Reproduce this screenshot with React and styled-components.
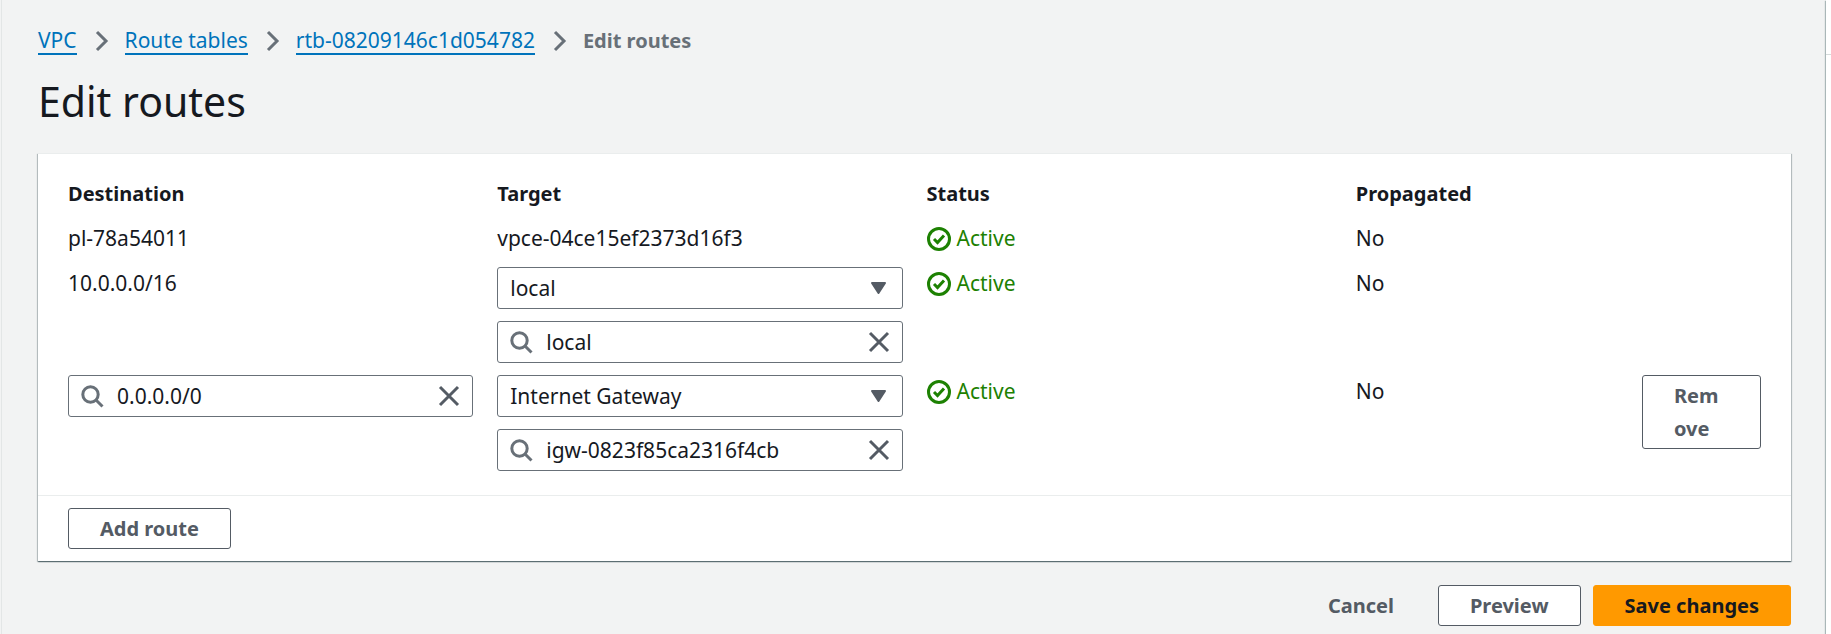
import React, { useState } from 'react';
import styled, { createGlobalStyle } from 'styled-components';

const GlobalStyle = createGlobalStyle`
  * { box-sizing: border-box; }
  body {
    margin: 0;
    background: #f2f3f3;
    color: #16191f;
    font: 400 21px/33px "Noto Sans", "Open Sans", sans-serif;
  }
  button, input, select { font: inherit; color: inherit; }
`;

const Shell = styled.div`
  display: flex;
  min-height: 100vh;
`;

const NavEdge = styled.div`
  flex: none;
  width: 2px;
  border-right: 1px solid #e3e6e6;
`;

const Content = styled.main`
  flex: 1;
  min-width: 0;
  padding: 24px 35px 8px 36px;
`;

const HelpPanel = styled.aside`
  flex: none;
  width: 5px;
  background: #fff;
  box-shadow: 0 1px 1px #aab7b8, -1px 1px 1px #aab7b8;
`;

const HelpHeader = styled.div`
  height: 55px;
  border-bottom: 1px solid #d5dbdb;
`;

const Crumbs = styled.ol`
  display: flex;
  flex-wrap: wrap;
  align-items: center;
  margin: 0;
  padding: 0;
  list-style: none;
`;

const Crumb = styled.li`
  display: flex;
  align-items: center;
  svg { margin: 0 16px; }
`;

const CrumbLink = styled.a`
  line-height: 26px;
  border-bottom: 2px solid #0073bb;
  color: #0073bb;
  text-decoration: none;
`;

const CrumbCurrent = styled.span`
  color: #687078;
  font-size: 20px;
  font-weight: 700;
`;

const Title = styled.h1`
  margin: 16px 0 24px;
  font-size: 41px;
  font-weight: 400;
  line-height: 56px;
`;

const Card = styled.section`
  background: #fff;
  border-top: 1px solid #eaeded;
  box-shadow: 0 1px 1px rgba(0, 28, 36, 0.4), 1px 1px 1px rgba(0, 28, 36, 0.2),
    -1px 1px 1px rgba(0, 28, 36, 0.2);
`;

const RouteTable = styled.table`
  display: block;
  padding: 23px 30px 24px;
  thead { display: block; margin-bottom: 12px; }
  tbody { display: grid; gap: 12px; }
`;

const Row = styled.tr`
  display: grid;
  grid-template-columns: repeat(12, minmax(0, 1fr));
  column-gap: 24px;
  align-items: start;
`;

const HeadCell = styled.th`
  grid-column: span ${(p) => p.$span};
  padding: 0;
  text-align: left;
  font-size: 20px;
  font-weight: 700;
`;

const Cell = styled.td`
  grid-column: span ${(p) => p.$span};
  display: grid;
  gap: 12px;
  padding: 0;
`;

const Field = styled.div`
  display: flex;
  align-items: center;
  height: 42px;
  padding: 0 11px;
  border: 1px solid #687078;
  border-radius: 3px;
  background: #fff;
`;

const FieldInput = styled.input`
  flex: 1;
  min-width: 0;
  height: 33px;
  margin-left: 13px;
  padding: 0;
  border: 0;
  outline: 0;
  background: transparent;
`;

const ClearButton = styled.button`
  display: flex;
  padding: 0;
  border: 0;
  background: none;
  cursor: pointer;
`;

const SelectWrap = styled.div`
  display: grid;
  align-items: center;
  > * { grid-area: 1 / 1; }
  svg { justify-self: end; margin-right: 16px; pointer-events: none; }
`;

const Select = styled.select`
  width: 100%;
  height: 42px;
  padding: 0 40px 0 12px;
  border: 1px solid #687078;
  border-radius: 3px;
  background: #fff;
  appearance: none;
`;

const Status = styled.span`
  display: flex;
  align-items: center;
  gap: 6px;
  color: #1d8102;
`;

const CardFooter = styled.div`
  padding: 12px 30px;
  border-top: 1px solid #eaeded;
`;

const tones = {
  normal: ['#fff', '#545b64', '#545b64'],
  primary: ['#ff9900', '#ff9900', '#16191f'],
  link: ['transparent', 'transparent', '#545b64'],
};

const Button = styled.button`
  padding: 3px 31px;
  border: 1px solid ${(p) => tones[p.$tone || 'normal'][1]};
  border-radius: 3px;
  background: ${(p) => tones[p.$tone || 'normal'][0]};
  color: ${(p) => tones[p.$tone || 'normal'][2]};
  font-size: 20px;
  font-weight: 700;
  text-align: left;
  cursor: pointer;
`;

const RemoveButton = styled(Button)`
  width: 100%;
  word-break: break-all;
`;

const Actions = styled.div`
  display: flex;
  justify-content: flex-end;
  gap: 12px;
  margin-top: 24px;
`;

const Chevron = () => (
  <svg width="16" height="22" viewBox="0 0 16 22" fill="none" stroke="#687078" strokeWidth="3" aria-hidden="true">
    <path d="M4 2l9 9-9 9" />
  </svg>
);

const SearchIcon = () => (
  <svg width="24" height="24" viewBox="0 0 24 24" fill="none" stroke="#687078" strokeWidth="3" aria-hidden="true">
    <circle cx="10.500" cy="10.500" r="7.700" />
    <path d="M15.500 15.500l7 7" />
  </svg>
);

const CloseIcon = () => (
  <svg width="24" height="24" viewBox="0 0 24 24" fill="none" stroke="#545b64" strokeWidth="3" strokeLinejoin="round" aria-hidden="true">
    <path d="M3 3l18 18M21 3L3 21" />
  </svg>
);

const CaretIcon = () => (
  <svg width="17" height="14" viewBox="0 0 17 14" fill="#545b64" stroke="#545b64" strokeWidth="2" strokeLinejoin="round" aria-hidden="true">
    <path d="M2 2h13L8.500 12z" />
  </svg>
);

const CheckIcon = () => (
  <svg width="24" height="24" viewBox="0 0 24 24" fill="none" stroke="#1d8102" strokeWidth="3" aria-hidden="true">
    <circle cx="12" cy="12" r="10.500" />
    <path d="M7 12l3.500 3.500L17 8.500" />
  </svg>
);

function SearchField({ label, initial }) {
  const [value, setValue] = useState(initial);
  return (
    <Field>
      <SearchIcon />
      <FieldInput aria-label={label} value={value} onChange={(e) => setValue(e.target.value)} />
      <ClearButton type="button" aria-label={`Clear ${label}`} onClick={() => setValue('')}>
        <CloseIcon />
      </ClearButton>
    </Field>
  );
}

function TargetSelect({ label, initial }) {
  return (
    <SelectWrap>
      <Select aria-label={label} defaultValue={initial}>
        <option>local</option>
        <option>Internet Gateway</option>
      </Select>
      <CaretIcon />
    </SelectWrap>
  );
}

const crumbs = ['VPC', 'Route tables', 'rtb-08209146c1d054782'];

const routes = [
  { destination: 'pl-78a54011', target: 'vpce-04ce15ef2373d16f3' },
  { destination: '10.0.0.0/16', type: 'local', target: 'local' },
  { destination: '0.0.0.0/0', type: 'Internet Gateway', target: 'igw-0823f85ca2316f4cb', editable: true },
];

export default function App() {
  return (
    <>
      <GlobalStyle />
      <Shell>
        <NavEdge />
        <Content>
          <nav aria-label="Breadcrumbs">
            <Crumbs>
              {crumbs.map((name) => (
                <Crumb key={name}>
                  <CrumbLink href="#">{name}</CrumbLink>
                  <Chevron />
                </Crumb>
              ))}
              <Crumb>
                <CrumbCurrent aria-current="page">Edit routes</CrumbCurrent>
              </Crumb>
            </Crumbs>
          </nav>
          <Title>Edit routes</Title>
          <Card>
            <RouteTable>
              <thead>
                <Row>
                  <HeadCell $span={3}>Destination</HeadCell>
                  <HeadCell $span={3}>Target</HeadCell>
                  <HeadCell $span={3}>Status</HeadCell>
                  <HeadCell $span={2}>Propagated</HeadCell>
                </Row>
              </thead>
              <tbody>
                {routes.map((r) => (
                  <Row key={r.destination}>
                    <Cell $span={3}>
                      {r.editable ? <SearchField label="Destination" initial={r.destination} /> : r.destination}
                    </Cell>
                    <Cell $span={3}>
                      {r.type ? (
                        <>
                          <TargetSelect label="Target type" initial={r.type} />
                          <SearchField label="Target" initial={r.target} />
                        </>
                      ) : (
                        r.target
                      )}
                    </Cell>
                    <Cell $span={3}>
                      <Status>
                        <CheckIcon />
                        Active
                      </Status>
                    </Cell>
                    <Cell $span={2}>No</Cell>
                    {r.editable && (
                      <Cell $span={1}>
                        <RemoveButton type="button">Remove</RemoveButton>
                      </Cell>
                    )}
                  </Row>
                ))}
              </tbody>
            </RouteTable>
            <CardFooter>
              <Button type="button">Add route</Button>
            </CardFooter>
          </Card>
          <Actions>
            <Button type="button" $tone="link">Cancel</Button>
            <Button type="button">Preview</Button>
            <Button type="button" $tone="primary">Save changes</Button>
          </Actions>
        </Content>
        <HelpPanel>
          <HelpHeader />
        </HelpPanel>
      </Shell>
    </>
  );
}
